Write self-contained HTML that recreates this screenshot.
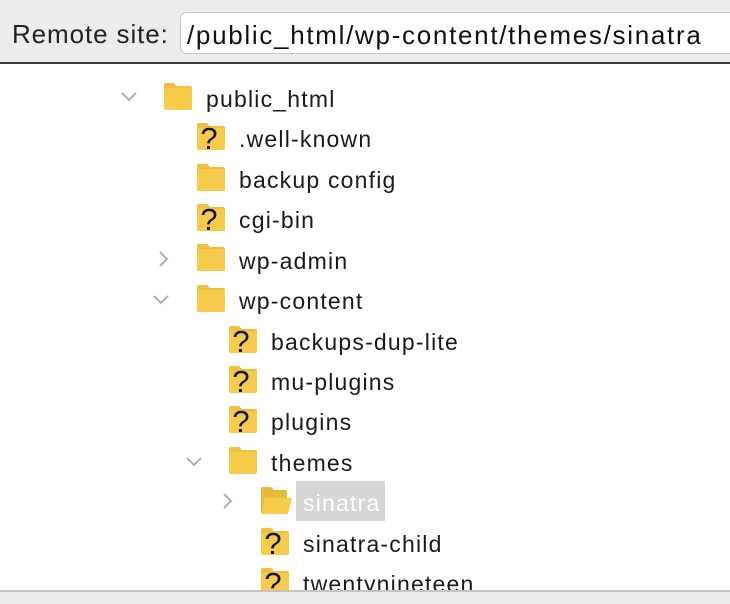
<!DOCTYPE html>
<html><head><meta charset="utf-8"><style>
html,body{margin:0;padding:0}
body{width:730px;height:602px;position:relative;overflow:hidden;background:#fff;font-family:"Liberation Sans",Arial,sans-serif;color:#1a1a1a}
.hdr{position:absolute;left:0;top:0;width:730px;height:62px;background:#ececec;border-bottom:2px solid #3a3a3a}
.lbl{position:absolute;left:12px;top:19px;font-size:26px;letter-spacing:0.9px;color:#222}
.inp{position:absolute;left:180px;top:12px;width:560px;height:42px;background:#fff;border:1px solid #c8c8c8;border-radius:7px;box-sizing:border-box}
.inp span{position:absolute;left:6px;top:7px;font-size:26px;letter-spacing:1.7px;color:#111;white-space:nowrap}
.row{position:absolute;height:40px;font-size:23px;letter-spacing:1.2px}
.t{position:absolute;top:8px;white-space:nowrap}
.bot{position:absolute;left:0;top:590px;width:730px;height:12px;background:#ececec;border-top:2px solid #c4c4c4}
.sel{position:absolute;left:296px;top:481px;width:89px;height:40px;background:#d6d6d6}
</style></head><body>
<svg width="0" height="0" style="position:absolute">
<defs>
<g id="f"><path d="M1 3 Q1 1 3 1 H11 L14 4 H27 Q29 4 29 6 V26 Q29 28 27 28 H3 Q1 28 1 26 Z" fill="#f0bf3c"/><path d="M1 7 Q1 6 3 6 H27 Q29 6 29 8 V26 Q29 28 27 28 H3 Q1 28 1 26 Z" fill="#f7cb4a"/></g>
<g id="q"><use href="#f"/><text x="13" y="27" font-size="31" text-anchor="middle" font-family="Liberation Sans,sans-serif" fill="#111">?</text></g>
<g id="o"><path d="M1 3 Q1 1 3 1 H11 L14 4 H25 Q27 4 27 6 V26 H1 Z" fill="#e8b93a"/><path d="M5 12 H32 L28 28 H1 Z" fill="#f7cb4a"/></g>
</defs></svg>
<div class="hdr"><div class="lbl">Remote site:</div><div class="inp"><span>/public_html/wp-content/themes/sinatra</span></div></div>

<div class="sel"></div>

<svg style="position:absolute;left:120px;top:91px" width="18" height="12"><path d="M2 2 L9 9 L16 2" stroke="#b0b0b0" stroke-width="2" fill="none"/></svg>
<svg style="position:absolute;left:163px;top:82px" width="32" height="30"><use href="#f"/></svg>
<div class="row" style="left:206px;top:78px"><span class="t">public_html</span></div>

<svg style="position:absolute;left:196px;top:122px" width="32" height="30"><use href="#q"/></svg>
<div class="row" style="left:239px;top:118px"><span class="t">.well-known</span></div>

<svg style="position:absolute;left:196px;top:163px" width="32" height="30"><use href="#f"/></svg>
<div class="row" style="left:239px;top:159px"><span class="t">backup config</span></div>

<svg style="position:absolute;left:196px;top:203px" width="32" height="30"><use href="#q"/></svg>
<div class="row" style="left:239px;top:199px"><span class="t">cgi-bin</span></div>

<svg style="position:absolute;left:158px;top:250px" width="12" height="18"><path d="M2 2 L9 9 L2 16" stroke="#b0b0b0" stroke-width="2" fill="none"/></svg>
<svg style="position:absolute;left:196px;top:243px" width="32" height="30"><use href="#f"/></svg>
<div class="row" style="left:239px;top:240px"><span class="t">wp-admin</span></div>

<svg style="position:absolute;left:152px;top:294px" width="18" height="12"><path d="M2 2 L9 9 L16 2" stroke="#b0b0b0" stroke-width="2" fill="none"/></svg>
<svg style="position:absolute;left:196px;top:284px" width="32" height="30"><use href="#f"/></svg>
<div class="row" style="left:239px;top:280px"><span class="t">wp-content</span></div>

<svg style="position:absolute;left:228px;top:325px" width="32" height="30"><use href="#q"/></svg>
<div class="row" style="left:271px;top:321px"><span class="t">backups-dup-lite</span></div>

<svg style="position:absolute;left:228px;top:365px" width="32" height="30"><use href="#q"/></svg>
<div class="row" style="left:271px;top:361px"><span class="t">mu-plugins</span></div>

<svg style="position:absolute;left:228px;top:405px" width="32" height="30"><use href="#q"/></svg>
<div class="row" style="left:271px;top:401px"><span class="t">plugins</span></div>

<svg style="position:absolute;left:185px;top:456px" width="18" height="12"><path d="M2 2 L9 9 L16 2" stroke="#b0b0b0" stroke-width="2" fill="none"/></svg>
<svg style="position:absolute;left:228px;top:446px" width="32" height="30"><use href="#f"/></svg>
<div class="row" style="left:271px;top:442px"><span class="t">themes</span></div>

<svg style="position:absolute;left:222px;top:492px" width="12" height="18"><path d="M2 2 L9 9 L2 16" stroke="#b0b0b0" stroke-width="2" fill="none"/></svg>
<svg style="position:absolute;left:260px;top:486px" width="34" height="30"><use href="#o"/></svg>
<div class="row" style="left:303px;top:482px;color:#fff"><span class="t">sinatra</span></div>

<svg style="position:absolute;left:260px;top:527px" width="32" height="30"><use href="#q"/></svg>
<div class="row" style="left:303px;top:523px"><span class="t">sinatra-child</span></div>

<svg style="position:absolute;left:260px;top:567px" width="32" height="30"><use href="#q"/></svg>
<div class="row" style="left:303px;top:563px"><span class="t">twentynineteen</span></div>

<div class="bot"></div>
</body></html>
